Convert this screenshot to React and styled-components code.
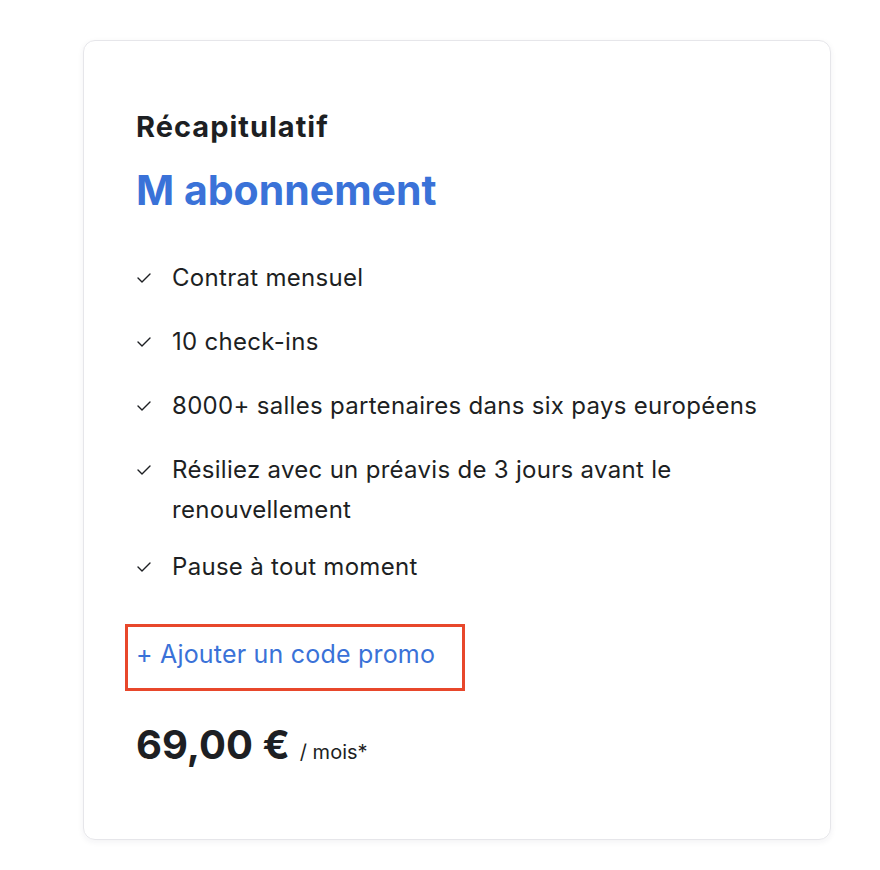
import styled, { createGlobalStyle } from 'styled-components'

const Global = createGlobalStyle`
  html, body { margin: 0; padding: 0; background: #fff; }
  body { font-family: Inter, "Noto Sans", sans-serif; color: #1d1f23; }
`

const Page = styled.div`
  padding: 40px 49px 30px 83px;
`

const Card = styled.div`
  width: 748px;
  height: 800px;
  box-sizing: border-box;
  border: 1px solid #e6e6ea;
  border-radius: 12px;
  box-shadow: 0 2px 6px rgba(30, 30, 60, 0.06);
  padding: 66px 52px 0 52px;
`

const Title = styled.h2`
  margin: 0;
  font-size: 29px;
  font-weight: 700;
  line-height: 40px;
  letter-spacing: 1px;
`

const Plan = styled.h1`
  margin: 18px 0 0;
  font-size: 41px;
  font-weight: 700;
  line-height: 50px;
  color: #3a72d8;
`

const List = styled.ul`
  list-style: none;
  margin: 43px 0 0;
  padding: 0;
  display: flex;
  flex-direction: column;
  gap: 24px;
`

const Item = styled.li`
  display: flex;
  align-items: flex-start;
  font-size: 24px;
  line-height: 40px;
  letter-spacing: 0.3px;
  margin-bottom: ${(p) => (p.$tight ? '-7px' : '0')};
`

const Check = styled.svg`
  flex: none;
  width: 16px;
  height: 40px;
  margin-right: 20px;
`

const Promo = styled.div`
  margin: 37px 0 0 -11px;
  width: 340px;
  height: 67px;
  box-sizing: border-box;
  border: 3px solid #e8472b;
  display: flex;
  align-items: center;
  padding-left: 8px;
  padding-bottom: 8px;
`

const PromoLink = styled.a`
  color: #3a72d8;
  font-size: 25px;
  letter-spacing: 0.2px;
  text-decoration: none;
  cursor: pointer;
`

const Price = styled.div`
  margin-top: 29px;
  display: flex;
  align-items: baseline;
  gap: 10px;
`

const Amount = styled.span`
  font-size: 40px;
  font-weight: 700;
`

const Per = styled.span`
  font-size: 20px;
`

const features = [
  { text: 'Contrat mensuel' },
  { text: '10 check-ins' },
  { text: '8000+ salles partenaires dans six pays européens' },
  { text: 'Résiliez avec un préavis de 3 jours avant le renouvellement', tight: true },
  { text: 'Pause à tout moment' },
]

const Tick = () => (
  <Check viewBox="0 0 16 40">
    <path d="M2 20 L6 24 L14 16" fill="none" stroke="#1d1f23" strokeWidth="1.4" strokeLinecap="round" strokeLinejoin="round" />
  </Check>
)

export default function App() {
  return (
    <>
      <Global />
      <Page>
        <Card>
          <Title>Récapitulatif</Title>
          <Plan>M abonnement</Plan>
          <List>
            {features.map((f) => (
              <Item key={f.text} $tight={f.tight}>
                <Tick />
                <span>{f.text}</span>
              </Item>
            ))}
          </List>
          <Promo>
            <PromoLink>+ Ajouter un code promo</PromoLink>
          </Promo>
          <Price>
            <Amount>69,00 €</Amount>
            <Per>/ mois*</Per>
          </Price>
        </Card>
      </Page>
    </>
  )
}
